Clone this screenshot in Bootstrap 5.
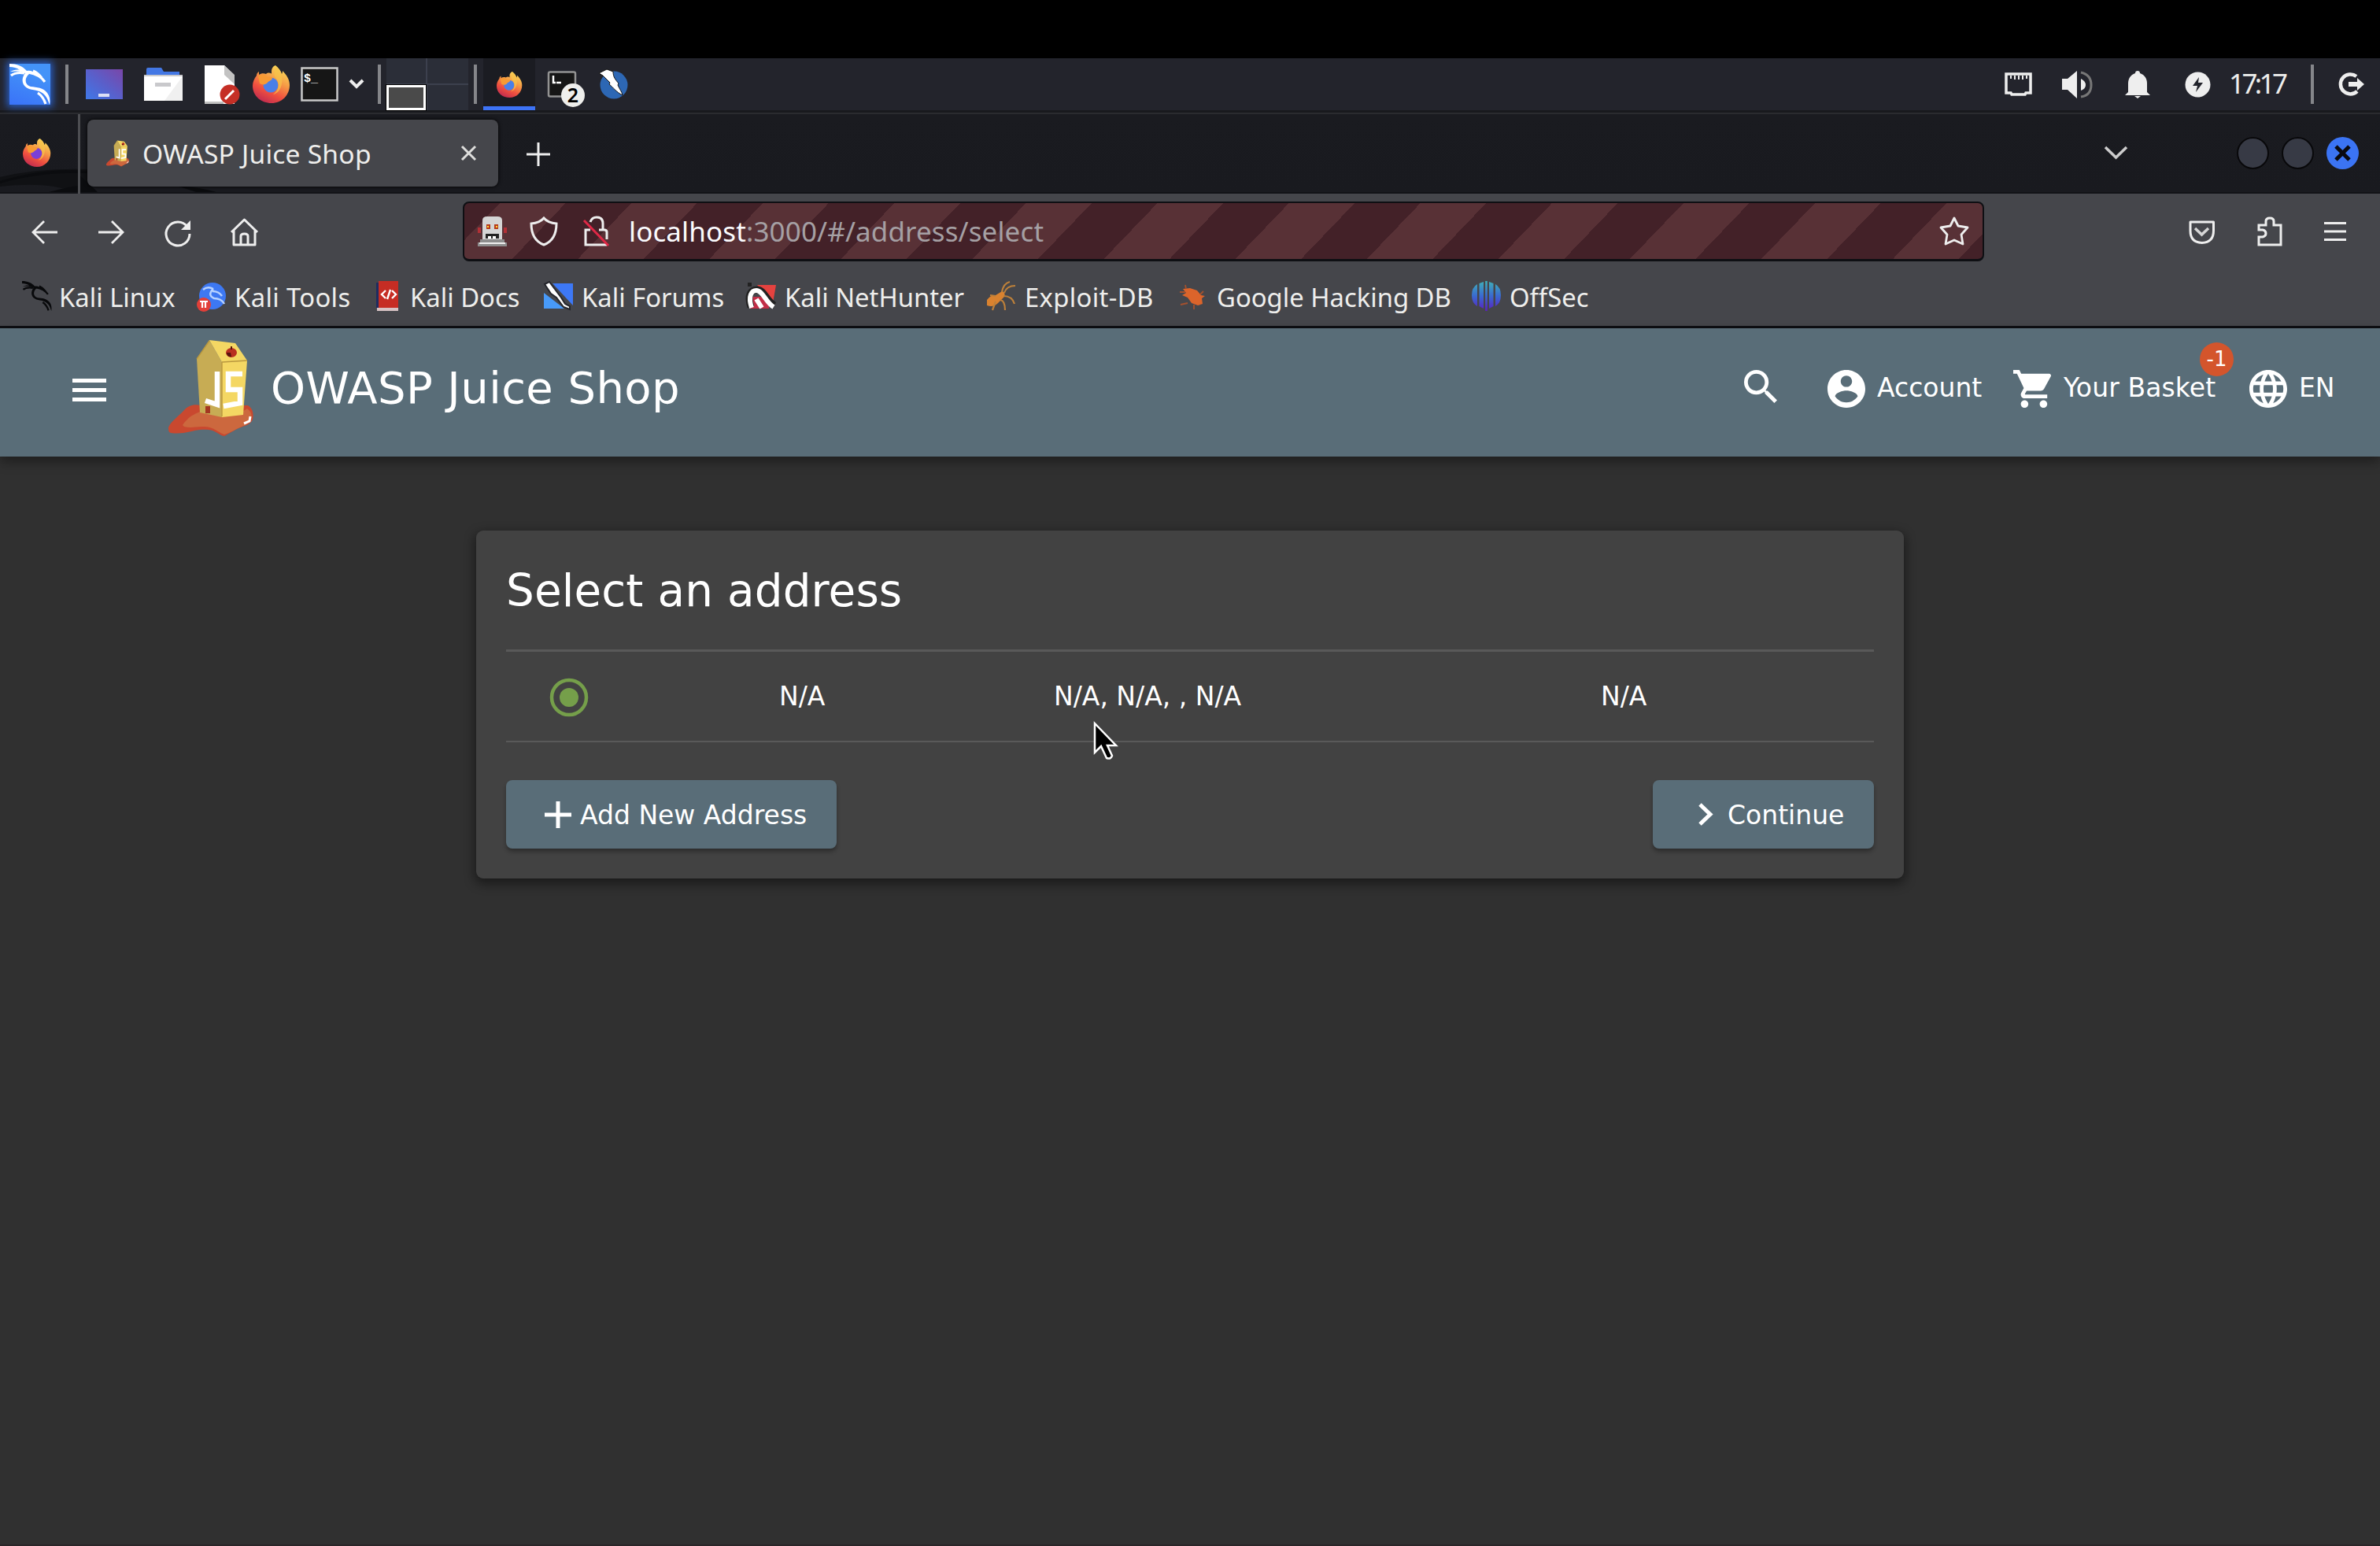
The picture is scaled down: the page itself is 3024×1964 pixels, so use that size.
<!DOCTYPE html>
<html lang="en">
<head>
<meta charset="utf-8">
<title>OWASP Juice Shop</title>
<link href="https://cdn.jsdelivr.net/npm/bootstrap@5.3.0/dist/css/bootstrap.min.css" rel="stylesheet">
<style>
html,body{height:100%;overflow:hidden}
body{background:#303030;color:#fff;font-family:"DejaVu Sans",sans-serif;font-size:33px;line-height:1.2;width:3024px;height:1964px}
svg{display:block;flex:none;overflow:visible}
.ui-font{font-family:"Noto Sans",sans-serif;color:#eeeeec;white-space:nowrap}
.letterbox{height:74px;background:#000}
.panel{height:66px;background:#23242c}
.panel-edge{height:5px;background:#18191d;border-bottom:2px solid #2a2b2f}
.kali-btn{width:52px;height:52px;margin-left:12px;background:linear-gradient(20deg,#3a72f8,#4393f8 75%);box-shadow:0 0 9px 3px #2a5fc4}
.divider{width:4px;height:50px;background:#85868a;flex:none}
.m19{margin-left:19px}.m22{margin-left:22px}.m27{margin-left:27px}.m28{margin-left:28px}.m16{margin-left:16px}.m13{margin-left:13px}.m17{margin-left:17px}.m7{margin-left:7px}
.pager{width:104px;height:66px;margin-left:7px;display:grid;grid-template-columns:50px 52px;grid-template-rows:32px 32px;gap:2px;background:#3c404e}
.pager div{background:#2b2e38}
.pager .here{background:#4a4a4a;border:3px solid #fff;outline:1px solid #000}
.task-on{width:66px;height:66px;margin-left:8px;background:#1b1c22;border-bottom:5px solid #3d73f6;padding:17px 0 0 17px}
.clock{font-size:35px;letter-spacing:-3.6px;margin-left:23px;width:104px;margin-top:-2px}
.spk{margin-left:38px}.bell{margin-left:42px}.bolt{margin-left:44px}.out{margin:0 20px 0 30px}
.tabs{height:101px;background:linear-gradient(#1a1b20,#191a1f);border-bottom:2px solid #121317;position:relative}
.swoosh{position:absolute;left:0;bottom:0;z-index:0}
.tabs>*:not(.swoosh){position:relative}
.fx-view{width:102px;height:101px;border-right:3px solid #4d4e52;padding:31px 0 0 28px}
.tab-card{width:522px;height:85px;margin:7px 0 0 9px;background:#45464b;border-radius:8px;padding:0 28px 0 24px;box-shadow:0 0 5px #000}
.tab-title{font-size:33.6px;margin-left:17px;letter-spacing:.22px;padding-top:2px}
.plus{margin:36px 0 0 36px}.wins{margin:29px 27px 0 0}.wins>svg{margin-top:11px}.wins .first{margin-left:139px}
.win{width:41px;height:41px;border-radius:50%;background:#373a45;border:2px solid #08080a;margin-left:16px;flex:none}
.win-x{background:#3b74f4;border:0;padding:11px}
.toolbar{height:90px;background:#45464b}
.nav-ic{margin:34px 0 0 40px;width:288px;justify-content:space-between}.nav-ic svg:nth-child(4){margin-top:-3px}
.lockx{margin-left:33px}.right-ic{padding:34px 43px 0 0}.puz{margin:-5px 0 0 54px}.brg{margin:2px 0 0 53px}
.urlbar{width:1933px;height:76px;margin:10px 0 0 260px;border:3px solid #0e0f13;border-width:2px 2px 3px;border-radius:8px;background:repeating-linear-gradient(133.8deg,#432128 0 32.6px,#583136 32.6px 92.9px,#432128 92.9px 120.6px);padding:0 17px;font-size:35px}
.urltext{color:#a5a0a4;margin-left:24px;letter-spacing:.12px}
.urltext span{color:#fbfbfe}
.marks{height:81px;background:#45464b;border-bottom:3px solid #0e0f13;font-size:32.8px}
.marks .bm{display:flex;align-items:center;height:78px;margin-top:3px;flex:none;gap:11px;padding-left:28px}
.bm svg{margin-top:-4px}
.w1{width:222px}.marks .w1{gap:9px}.w2{width:228px}.w3{width:213px}.w4{width:258px}.w5{width:304px}.w6{width:244px}.w7{width:373px}
.w2,.w6{letter-spacing:.35px}
.appbar{height:163px;background:#596d78;box-shadow:0 6px 14px rgba(0,0,0,.4);position:relative;z-index:2;padding:0}
.appname{font-size:56px;margin-left:22px;line-height:1;margin-top:-12px;white-space:nowrap;letter-spacing:.42px}
.appbar .lbl{font-size:33px;white-space:nowrap;margin-top:-3px}
.side{margin:-7px 0 0 92px}.jlogo{margin:-11px 0 0 79px}.acts{width:808px;height:48px;margin-top:-9px}.acts>svg:first-child{margin-top:-6px}.acc{margin-left:64px}.l1{margin-left:15px;width:173px}.l2{margin-left:16px;width:236px;letter-spacing:.1px}.l3{margin-left:15px}
.cartcount{position:absolute;left:2795px;top:18px;width:43px;height:43px;border-radius:50%;background:#d4552c;font-size:26px;line-height:42px;text-align:center}
.addr{width:1814px;margin:94px auto 0;height:442px;background:#424242;border-radius:9px;box-shadow:0 5px 14px 2px rgba(0,0,0,.45);padding:0 38px;position:relative}
.addr h1{font-size:56.4px;line-height:66px;margin:0;padding-top:44px;height:151px;font-weight:400;letter-spacing:.1px}
.addr-row{height:118px;border-top:3px solid #595959;border-bottom:2px solid #595959}
.c1{width:347px;padding:3px 0 0 56px}.c2{width:349px}.c3{width:695px}
.mat{height:87px;background:#596d78;border-radius:8px;border:0;color:#fff;font-size:33px;box-shadow:0 4px 5px rgba(0,0,0,.3);display:flex;align-items:center;padding:0;white-space:nowrap}
.mat:hover{background:#596d78;color:#fff}
.mat span{margin-top:2px}
.add{width:420px;padding-left:49px;gap:11px}.cont{width:281px;padding-left:58px;gap:18px}
.acts2{padding-top:48px}
.pointer{position:absolute;left:785px;top:243px}
.bottom-edge{height:2px;background:#2a2628;margin-top:846px}
</style>
<script src="https://cdn.jsdelivr.net/npm/bootstrap@5.3.0/dist/js/bootstrap.bundle.min.js"></script>
</head>
<body>
<svg width="0" height="0" class="position-absolute">
<defs>
<linearGradient id="fxg" x1=".8" y1="0" x2=".3" y2="1"><stop offset="0" stop-color="#fbe25c"/><stop offset=".4" stop-color="#f59a45"/><stop offset=".7" stop-color="#f0503f"/><stop offset="1" stop-color="#c02a50"/></linearGradient>
<linearGradient id="osg" x1="0" y1="0" x2="0" y2="38" gradientUnits="userSpaceOnUse"><stop offset="0" stop-color="#3fb0b8"/><stop offset=".5" stop-color="#3a6ad0"/><stop offset="1" stop-color="#5a1fc0"/></linearGradient>
<linearGradient id="dsk" x1="0" y1="1" x2="1" y2="0"><stop offset="0" stop-color="#3f78e8"/><stop offset=".5" stop-color="#5a5fca"/><stop offset="1" stop-color="#7a46a8"/></linearGradient>
<symbol id="fx" viewBox="0 0 48 48"><path fill="url(#fxg)" d="M29 0c4 3 7 7 8 11 1-2 1-3 1-4 5 5 9 11 9 18 0 13-10 23-23 23S0 39 0 26c0-5 2-9 5-13 0-2 1-4 3-5v4c3-2 6-2 9-1 3-3 7-1 7 0V7c0-3 2-6 5-7z"/><circle cx="23" cy="25" r="9.5" fill="var(--core)"/><path fill="#f79a34" d="M7 14c5-4 10-2 12 1 3-1 6 0 6 2-2 3-5 3-6 5-3 3-7 3-10 1z"/><path fill="#f6c34a" opacity=".7" d="M30 2c6 6 9 13 7 21-1 8-6 13-11 14 7-5 9-14 4-20-4-5-3-10 0-15z"/></symbol>
<symbol id="dragon" viewBox="0 0 52 52"><path fill="currentColor" d="M0 0c9 0 17 3 22 9 5-1 9 1 11 4-4-2-8-1-10 2-4 5-3 12 4 14 8 1 16 1 21 8 3 4 4 9 3 15-2-5-3-9-6-12-5-6-12-6-20-8-9-3-11-13-5-20C14 9 8 9 1 10c4-2 8-3 12-2C9 5 5 4 0 4z"/><path fill="none" stroke="currentColor" stroke-width="3.200" d="M2 15c5-4 11-4 17-3M24 11c10 2 17 6 21 12M30 9c5 2 8 5 11 9M36 37c6 4 8 8 10 14"/></symbol>
<symbol id="juice" viewBox="0 0 108 122"><path fill="#c9482f" d="M0 111c3-8 12-13 20-22 5-6 13-8 21-6h60c5 3 8 9 6 18-2 6-10 8-18 11-8 4-14 8-18 10-7-1-10-7-20-8-17-2-29 7-48 4-3-1-3-4-3-7z"/><path fill="#cc683e" d="M18 108c7-10 15-15 26-18 16 8 40 9 56-3 6 4 7 11 4 16-3 5-13 7-21 12-5 2-8 4-12 5-9-3-12-9-25-10-10 0-18 2-26 0z"/><path fill="#c7ac54" d="M36 24 52 0l16 28v70l-28-6z"/><path fill="#f4d763" d="m52 0 33 4 15 22-5 69-27 3V28z"/><path fill="none" stroke="#b9983f" stroke-width="1.4" d="m36 24 16-23M68 28l32-2M68 28v69"/><ellipse cx="80" cy="16" rx="7" ry="6" fill="#b92f20"/><path fill="#5a140e" d="M74 16h5l1 5c-4 1-6-2-6-5zM79 8h2v4h-2z"/><path fill="none" stroke="#fff" stroke-width="6.500" d="M62 40v42l-15-5M94 43H76v20h15v17l-21 4"/><path stroke="#a43722" stroke-width="6" d="M50 84v9"/><path fill="none" stroke="#fff" stroke-width="3" d="m104 97-1 6-7 3"/></symbol>
</defs></svg>

<div class="letterbox"></div>
<header class="panel d-flex align-items-center ui-font">
 <div class="kali-btn"><svg width="52" height="52" color="#fff"><use href="#dragon"/></svg></div>
 <div class="divider m19"></div>
 <svg class="m22" width="47" height="38"><rect width="47" height="38" fill="url(#dsk)"/><rect x="16" y="31" width="14" height="4" fill="#dcdff5"/></svg>
 <svg class="m27" width="49" height="42"><path fill="#4377e4" d="M3 10V2q0-2 2-2h17l3 5h20v8H3z"/><path fill="#fff" d="M0 9h49v33H0z"/><path fill="#f0f0f0" d="M49 11v31H26z"/><path fill="#c9c9cc" d="M0 9h49v2H0zM14 19h20v5H14z"/></svg>
 <svg class="m28" width="45" height="49"><path fill="#fff" d="M0 0h25l13 13v36H0z"/><path fill="#c2c2c2" d="M25 0l13 12v12L25 12zM0 46h24v3H0z"/><circle cx="32" cy="37" r="12.500" fill="#c52f26"/><path stroke="#fff" stroke-width="3" d="m26 43 11-11"/></svg>
 <svg class="m16" width="48" height="48" style="--core:#4a7fe8"><use href="#fx"/></svg>
 <svg class="m13" width="48" height="46"><rect x="1.5" y="2.5" width="45" height="41" fill="#161616" stroke="#c9c9c9" stroke-width="2.5"/><text x="4" y="20" fill="#fff" font-family="Liberation Mono" font-weight="700" font-size="15">$_</text></svg>
 <svg class="m13" width="20" height="14"><path fill="none" stroke="#eee" stroke-width="4" d="m2 2 8 8 8-8"/></svg>
 <div class="divider m17"></div>
 <div class="pager"><div></div><div></div><div class="here"></div><div></div></div>
 <div class="divider m7"></div>
 <div class="task-on"><svg width="33" height="33" style="--core:#4a7fe8"><use href="#fx"/></svg></div>
 <svg class="m16" width="48" height="46"><rect x="1" y="7.500" width="34" height="31" rx="2" fill="#161616" stroke="#929292" stroke-width="2.500"/><path fill="none" stroke="#fff" stroke-width="2.500" d="M7 12v9h3M11 21h6"/><circle cx="32" cy="37" r="15" fill="#eeeeec"/><text x="32" y="46" text-anchor="middle" font-family="Noto Sans" font-weight="600" font-size="25" fill="#000">2</text></svg>
 <svg class="m17" width="38" height="38"><circle cx="19" cy="20" r="17.500" fill="#2d67b4"/><path fill="#fff" stroke="#111" stroke-width="1" d="M0 5 10 0l8 3c0 7 3 10 7 15l-1 2c2 5 5 8 6 13-8-4-12-10-17-14l1-2L5 8z"/></svg>
 <div class="d-flex align-items-center ms-auto">
  <svg width="35" height="30" viewBox="0 0 35 30"><path fill="none" stroke="#eee" stroke-width="3.500" d="M2 2h31v24h-6l-1 2H9l-1-2H2z"/><path stroke="#eee" stroke-width="2" d="M8 4v4M13 4v5M18 4v5M23 4v5M28 4v4"/></svg>
  <svg width="38" height="35" class="spk" viewBox="0 0 38 35"><path fill="#eee" d="M0 10h7L19 0v35L7 24H0zM24 10q6 3 6 8t-6 7z"/><path fill="none" stroke="#777" stroke-width="3" d="M24 2q13 3 13 16T24 33"/></svg>
  <svg width="32" height="35" class="bell" viewBox="0 0 32 35"><path fill="#eee" d="M16 0c2 0 3 1 3 3 6 2 9 7 9 13v11l4 4H0l4-4V16C4 10 7 5 13 3c0-2 1-3 3-3zM12 32h8l-4 3z"/></svg>
  <svg width="33" height="33" class="bolt" viewBox="0 0 33 33"><circle cx="16.500" cy="16.500" r="16" fill="#eee"/><path fill="#23242c" d="m18 7-8 11h6l-2 8 9-12h-6z"/></svg>
  <div class="clock">17:17</div>
  <div class="divider"></div>
  <svg width="34" height="32" class="out" viewBox="0 0 34 32"><path fill="none" stroke="#eee" stroke-width="4.500" d="M24 6a12.500 12.500 0 1 0 1 19"/><path fill="#eee" d="M14 13h11V8l9 8-9 8v-5H14z"/></svg>
 </div>
</header>
<div class="panel-edge"></div>
<div class="tabs d-flex ui-font">
 <svg class="swoosh" width="300" height="36"><path fill="#101114" d="M0 17Q50 5 111 7v29H95Q60 22 0 29z"/><path fill="#0b0c0f" d="M0 22Q60 4 111 9v3Q50 10 0 25zM62 36q30-8 40-8l-2-14q14 12 24 22zM225 28q30 2 50 8h-26z"/></svg>
 <div class="fx-view"><svg width="38" height="36" style="--core:#7a3fd8"><use href="#fx"/></svg></div>
 <div class="tab-card d-flex align-items-center">
  <svg width="29" height="34"><use href="#juice"/></svg><span class="tab-title">OWASP Juice Shop</span>
  <svg class="ms-auto" width="19" height="19"><path stroke="#dededc" stroke-width="3" d="m1 1 17 17M18 1 1 18"/></svg>
 </div>
 <svg class="plus" width="30" height="30"><path stroke="#eee" stroke-width="3" d="M15 0v30M0 15h30"/></svg>
 <div class="d-flex ms-auto wins">
  <svg width="29" height="18"><path fill="none" stroke="#ccc" stroke-width="3.500" d="m1 2 13.500 13L28 2"/></svg>
  <div class="win first"></div><div class="win"></div>
  <div class="win win-x"><svg width="19" height="19"><path stroke="#0a0a10" stroke-width="5" d="m1 1 17 17M18 1 1 18"/></svg></div>
 </div>
</div>
<div class="toolbar d-flex ui-font">
 <div class="d-flex nav-ic"><svg width="33" height="30"><path fill="none" stroke="#eee" stroke-width="2.800" d="M33 15H2M16 1 2 15l14 14"/></svg>
 <svg width="33" height="30"><path fill="none" stroke="#eee" stroke-width="2.800" d="M1 15h31M18 1l14 14-14 14"/></svg>
 <svg width="34" height="34" viewBox="-1 0 34 34"><path fill="none" stroke="#eee" stroke-width="3" d="M29 8A15 15 0 1 0 32 17"/><path fill="#eee" d="M33 0v12H21z"/></svg>
 <svg width="35" height="36" viewBox="0 0 35 36"><path fill="none" stroke="#eee" stroke-width="3" stroke-linejoin="round" d="M1 18 17.500 2 34 18M4 15v19h27V15M13 34V23q0-3 4.500-3t4.500 3v11"/></svg></div>
 <div class="urlbar d-flex align-items-center">
  <svg width="37" height="38" viewBox="0 0 37 38"><path fill="#b23036" d="M0 14h4v7H0zM33 14h4v7h-4z"/><path fill="#d5d5d5" d="M6 30V5q0-5 6-5h13q6 0 6 5v25z"/><path fill="#8d8d8d" d="M3 29h31v4h3v5H0v-5h3z"/><path fill="#eee" d="M2 33h33v2H2z"/><path fill="#b63a1a" d="M11 10h5v6h-5zM21 10h5v6h-5z"/><path fill="#fd3" d="M12 12h2v2h-2zM23 12h2v2h-2z"/><path fill="#222" d="M10 22h17v6H10z"/><path fill="#fff" d="M13 25h4v3h-4zM19 25h4v3h-4z"/></svg>
  <svg width="36" height="38" class="m28" viewBox="-1 -1 36 38"><path fill="none" stroke="#eee" stroke-width="3" d="M18 1Q13 7 2 8q0 21 16 27Q34 29 34 8 23 7 18 1z"/></svg>
  <svg width="34" height="38" class="lockx" viewBox="0 0 34 38"><path fill="none" stroke="#eee" stroke-width="3" d="M9 7Q11 1 17 1q8 0 8 8v8M9 17H3v19h27M20 17h7q3 0 3 3v9"/><path stroke="#df2846" stroke-width="3" d="m1 5 31 32"/></svg>
  <div class="urltext"><span>localhost</span>:3000/#/address/select</div>
  <svg width="38" height="37" class="ms-auto" viewBox="0 0 38 37"><path fill="none" stroke="#eee" stroke-width="2.800" stroke-linejoin="round" d="m19 2 5 10 12 2-8 9 2 12-11-5-11 5 2-12-8-9 12-2z"/></svg>
 </div>
 <div class="d-flex ms-auto right-ic">
  <svg width="33" height="30"><path fill="none" stroke="#eee" stroke-width="3" stroke-linejoin="round" d="M2 2h29.500v11q0 15-14.700 15.500Q2 28 2 13z"/><path fill="none" stroke="#d6d6d6" stroke-width="3.500" d="m8 10 8.500 8L25 10"/></svg>
  <svg width="32" height="38" class="puz"><path fill="none" stroke="#eee" stroke-width="3" d="M2 11h9V6q0-4 5-4t5 4v5h9v25H2V26h5q4-1 4-4.500T7 17H2z"/></svg>
  <svg width="28" height="24" class="brg"><path stroke="#eee" stroke-width="2.800" d="M0 1.500h28M0 12h28M0 22.500h28"/></svg>
 </div>
</div>
<nav class="marks d-flex ui-font">
 <div class="bm w1"><svg width="38" height="38" color="#08090b"><use href="#dragon"/></svg>Kali Linux</div>
 <div class="bm w2"><svg width="37" height="38"><circle cx="20" cy="19" r="17" fill="#3d78f2"/><path fill="none" stroke="#b7d2ff" stroke-width="2.500" d="M8 11q6-5 13-1M21 10q-8 8 1 12 9 0 13 7M20 13q8 0 12 6"/><circle cx="9" cy="30" r="9" fill="#e23f38"/><path stroke="#fff" stroke-width="2.200" d="M4 26h10M7 25v9M11 25v9"/></svg>Kali Tools</div>
 <div class="bm w3"><svg width="32" height="38"><path fill="#1e2c60" d="M0 2h4v32H0z"/><path fill="#c62d24" d="M3 0h25v34H3z"/><path fill="#d8c3c4" d="M1 34h27v4H1z"/><path fill="none" stroke="#fff" stroke-width="2.400" d="m12 12-5 5 5 5M20 12l5 5-5 5M18 11l-4 12"/></svg>Kali Docs</div>
 <div class="bm w4"><svg width="37" height="38"><path fill="#3d78f6" d="M11 3h26v28z"/><path fill="#489af8" d="M0 15v20h26z"/><path fill="#fff" stroke="#25262c" stroke-width="2" d="M1 4 7 1l9 12 6 8 5 8 6 3v4l-8-3-9-12-7-5z"/></svg>Kali Forums</div>
 <div class="bm w5"><svg width="37" height="38"><path fill="#e5423f" d="M13 5h24l-4 23z"/><path fill="#c22f48" d="M2 20h26v15H4z"/><path fill="none" stroke="#222" stroke-width="9" d="M5 33C0 18 5 11 13 11c9 0 12 15 22 20"/><path fill="none" stroke="#fff" stroke-width="6" d="M6 34C1 19 6 12 12 12c8 0 12 15 22 21M19 34l-7-11"/><path fill="#222" d="M1 2h5v5H1z"/></svg>Kali NetHunter</div>
 <div class="bm w6"><svg width="38" height="38"><path fill="#d9822f" d="M1 24q5-7 11-6l8-5q5 1 3 7l-8 8Q9 34 1 31z"/><path fill="none" stroke="#bd803a" stroke-width="2.200" d="M20 14Q22 3 30 1M23 15q3-9 14-9M22 19q11 0 14 10M18 24q6 1 6 13M12 26 8 37M12 19 5 18"/></svg>Exploit-DB</div>
 <div class="bm w7"><svg width="38" height="38"><path fill="#db642b" d="m6 10 9-1 9 3 5 6 5 1-4 3 1 7-6 2-8-3-5-7-7-3 5-3z"/><path fill="none" stroke="#a5512e" stroke-width="1.800" d="M10 10 9 5M2 14h7M3 30l9-2M28 17l4-4M20 30v6"/></svg>Google Hacking DB</div>
 <div class="bm"><svg width="37" height="38"><path fill="url(#osg)" d="M7 4v28Q0 28 0 18T7 4zM9.500 3 15 1v34q-4-2-5.500-3zM17.200 0h2.600v38h-2.600zM22 1l5.500 2v29q-1.500 1-5.500 3zM30 4q7 4 7 14t-7 14z"/></svg>OffSec</div>
</nav>
<section class="appbar d-flex align-items-center">
 <svg width="43" height="29" class="side"><path stroke="#fff" stroke-width="5" d="M0 2.500h43M0 14.500h43M0 26.500h43"/></svg>
 <svg width="108" height="122" class="jlogo"><use href="#juice"/></svg>
 <div class="appname">OWASP Juice Shop</div>
 <div class="d-flex align-items-center ms-auto acts">
  <svg width="42" height="42" viewBox="3 3 17.500 17.500" fill="#fff"><path d="M15.500 14h-.79l-.28-.27A6.471 6.471 0 0 0 16 9.500 6.500 6.500 0 1 0 9.500 16c1.610 0 3.090-.59 4.230-1.570l.27.28v.79l5 4.990L20.490 19l-4.990-5zm-6 0C7.010 14 5 11.990 5 9.500S7.010 5 9.500 5 14 7.010 14 9.500 11.990 14 9.500 14z"/></svg>
  <svg class="acc" width="48" height="48" viewBox="2 2 20 20" fill="#fff"><path d="M12 2C6.480 2 2 6.480 2 12s4.480 10 10 10 10-4.480 10-10S17.520 2 12 2zm0 3c1.660 0 3 1.340 3 3s-1.340 3-3 3-3-1.340-3-3 1.340-3 3-3zm0 14.200c-2.500 0-4.710-1.280-6-3.220.03-1.990 4-3.080 6-3.080 1.990 0 5.970 1.090 6 3.080-1.290 1.940-3.500 3.220-6 3.220z"/></svg>
  <span class="lbl l1">Account</span>
  <svg width="48" height="48" viewBox="1 2 20 20" fill="#fff"><path d="M7 18c-1.100 0-1.990.9-1.990 2S5.900 22 7 22s2-.9 2-2-.9-2-2-2zM1 2v2h2l3.600 7.590-1.350 2.450c-.16.280-.25.610-.25.960 0 1.100.9 2 2 2h12v-2H7.420c-.14 0-.25-.11-.25-.25l.03-.12.9-1.630h7.450c.75 0 1.410-.41 1.750-1.030l3.580-6.490A1 1 0 0 0 20 4H5.210l-.94-2H1zm16 16c-1.100 0-1.990.9-1.990 2s.89 2 1.990 2 2-.9 2-2-.9-2-2-2z"/></svg>
  <span class="lbl l2">Your Basket</span>
  <svg width="48" height="48" viewBox="2 2 20 20" fill="#fff"><path d="M11.990 2C6.470 2 2 6.480 2 12s4.470 10 9.990 10C17.520 22 22 17.520 22 12S17.520 2 11.990 2zm6.930 6h-2.950a15.650 15.650 0 0 0-1.380-3.560A8.030 8.030 0 0 1 18.920 8zM12 4.040c.83 1.200 1.480 2.530 1.910 3.960h-3.820c.43-1.430 1.080-2.760 1.910-3.960zM4.260 14C4.100 13.360 4 12.690 4 12s.1-1.360.26-2h3.380c-.08.66-.14 1.320-.14 2s.06 1.340.14 2H4.260zm.82 2h2.950c.32 1.250.78 2.450 1.380 3.560A7.987 7.987 0 0 1 5.080 16zm2.950-8H5.080a7.987 7.987 0 0 1 4.330-3.560A15.650 15.650 0 0 0 8.030 8zM12 19.960c-.83-1.200-1.480-2.530-1.910-3.960h3.820c-.43 1.430-1.080 2.760-1.910 3.960zM14.340 14H9.660c-.09-.66-.16-1.320-.16-2s.07-1.350.16-2h4.680c.09.65.16 1.320.16 2s-.07 1.340-.16 2zm.25 5.560c.6-1.110 1.060-2.310 1.380-3.560h2.950a8.030 8.030 0 0 1-4.330 3.560zM16.360 14c.08-.66.14-1.320.14-2s-.06-1.340-.14-2h3.380c.16.640.26 1.310.26 2s-.1 1.360-.26 2h-3.380z"/></svg>
  <span class="lbl l3">EN</span>
 </div>
 <span class="cartcount">-1</span>
</section>
<main class="addr">
 <h1>Select an address</h1>
 <div class="addr-row d-flex align-items-center">
  <div class="c1"><svg width="48" height="48"><circle cx="24" cy="24" r="22" fill="none" stroke="#759f4a" stroke-width="4.500"/><circle cx="24" cy="24" r="12" fill="#759f4a"/></svg></div>
  <div class="c2">N/A</div><div class="c3">N/A, N/A, , N/A</div><div>N/A</div>
 </div>
 <div class="d-flex justify-content-between acts2">
  <button class="btn mat add"><svg width="34" height="34"><path stroke="#fff" stroke-width="5" d="M17 0v34M0 17h34"/></svg><span>Add New Address</span></button>
  <button class="btn mat cont"><svg width="19" height="29"><path fill="none" stroke="#fff" stroke-width="5" d="m2 2 13 12.500L2 27"/></svg><span>Continue</span></button>
 </div>
 <svg class="pointer" width="30" height="48"><path fill="#000" stroke="#fff" stroke-width="2.500" d="M1 2v37l8-8 7 15q5 2 7-3l-6-13h11z"/></svg>
</main>
<div class="bottom-edge"></div>
</body>
</html>
